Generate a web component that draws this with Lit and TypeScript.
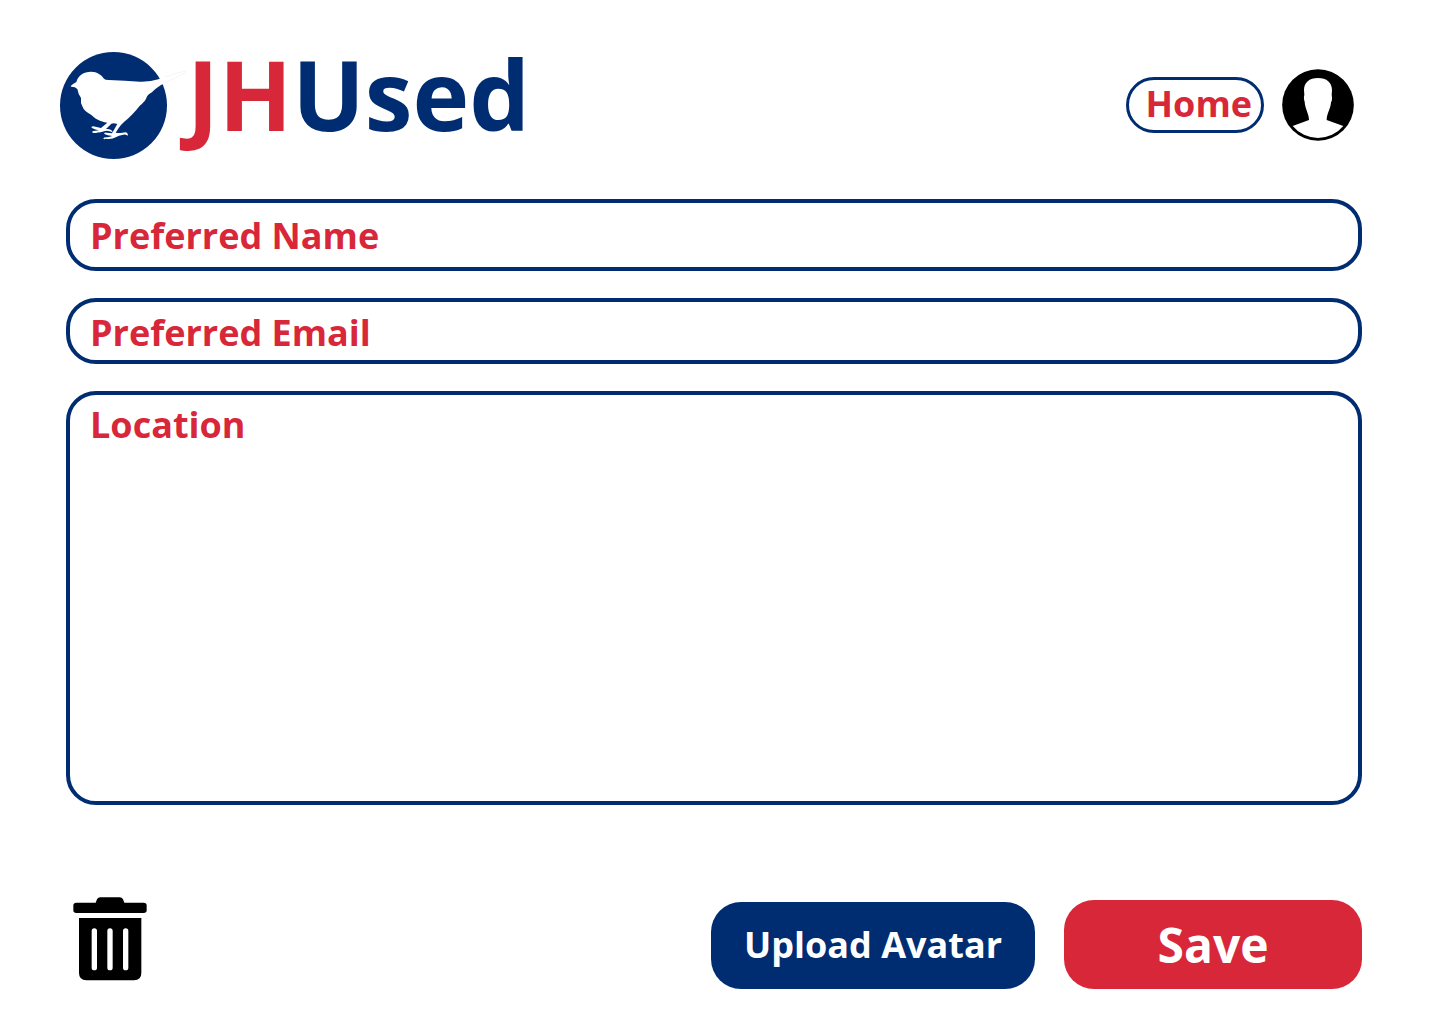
import { LitElement, html, css } from "lit";
import { customElement } from "lit/decorators.js";

@customElement("app-root")
export class AppRoot extends LitElement {
  static styles = css`
    :host {
      --navy: #002d72;
      --red: #d82739;
      box-sizing: border-box;
      min-height: 100vh;
      padding: 52px 78px 35px 66px;
      background: #fff;
      font-family: "Open Sans", "Noto Sans", sans-serif;
      font-weight: 700;
      font-size: 36px;
      line-height: 48px;
      display: flex;
      flex-direction: column;
    }
    * {
      box-sizing: border-box;
    }
    svg {
      display: block;
    }
    button,
    input,
    textarea {
      font: inherit;
      margin: 0;
      border: 0;
      background: none;
    }
    button {
      padding: 0;
      cursor: pointer;
    }
    .header {
      display: flex;
      justify-content: space-between;
      align-items: center;
      margin: 0 8px 40px -6px;
    }
    .brand {
      display: flex;
      align-items: center;
      height: 107px;
      text-decoration: none;
    }
    .title {
      margin: 0 0 24px;
      font-size: 96px;
      line-height: 130px;
      color: var(--navy);
    }
    .accent {
      color: var(--red);
    }
    .nav {
      display: flex;
      align-items: center;
      gap: 18px;
      margin-bottom: 2px;
    }
    .home {
      padding: 0 9px 2px 17px;
      border: 3px solid var(--navy);
      border-radius: 28px;
      color: var(--red);
      text-decoration: none;
    }
    .form {
      flex: 1;
      display: flex;
      flex-direction: column;
    }
    .fields {
      flex: 1;
      display: flex;
      flex-direction: column;
      gap: 27px;
    }
    .field {
      display: flex;
      gap: 16px;
      padding: 7px 20px 3px;
      border: 4px solid var(--navy);
      border-radius: 30px;
      color: var(--red);
      cursor: text;
    }
    .field.roomy {
      padding: 9px 20px 7px;
    }
    .field.area {
      flex: 1;
      padding: 6px 20px;
    }
    .control {
      flex: 1;
      min-width: 0;
      padding: 0;
      outline: none;
      resize: none;
      color: var(--navy);
    }
    .footer {
      display: flex;
      justify-content: space-between;
      align-items: flex-end;
      margin-top: 92px;
    }
    .trash {
      margin: 0 0 8px 7px;
    }
    .actions {
      display: flex;
      align-items: flex-end;
      gap: 29px;
    }
    .action {
      border-radius: 30px;
      color: #fff;
    }
    .upload {
      padding: 19px 33px 20px;
      background: var(--navy);
    }
    .save {
      min-width: 298px;
      padding: 12px 24px;
      font-size: 48px;
      line-height: 65px;
      background: var(--red);
    }
  `;

  private bird() {
    return html`<svg width="127" height="107" viewBox="30 21 381 321" aria-hidden="true">
      <circle cx="190.5" cy="181.5" r="160.5" fill="#002d72" />
      <path
        fill="#fff"
        d="M62 123 Q70 115 79 111 C84 92 101 80 123 80 C142 80 155 90 162 101 Q165 105 176 105 Q225 107 270 110 Q300 111 328 102 Q365 87 406 78 Q410 80 405 84 Q370 104 339 117 C322 126 314 134 306 142 Q292 149 290 157 C284 172 276 176 268 184 C256 200 240 217 222 231 Q212 240 206 249 L197 263 C207 266 218 263 227 262 Q235 264 233 272 Q224 266 217 270 Q206 272 199 276 Q184 285 165 281 Q162 285 160 280 Q163 275 174 277 L187 273 Q172 272 163 267 Q161 261 170 263 L186 265 L202 237 Q190 233 184 236 Q174 246 168 252 C176 251 186 253 188 262 Q176 256 165 258 Q150 263 146 262 Q138 266 128 263 Q124 259 131 258 L147 256 Q136 254 126 249 Q121 244 130 244 L153 249 L172 233 C150 230 135 220 123 209 Q102 199 97 184 Q91 174 93 159 Q85 149 82 132 Q76 125 64 125 Z"
      />
      <path fill="none" stroke="#f0f0f0" stroke-width="2" d="M345 96 Q380 83 407 78 Q409 81 400 86 Q370 103 345 113" />
    </svg>`;
  }

  private avatar() {
    return html`<svg width="72" height="72" viewBox="0 0 216 216" aria-hidden="true">
      <circle cx="108" cy="108" r="107.5" />
      <path
        fill="#fff"
        d="M108 27 C134 27 150 41 150 63 L149 78 Q152 92 147 100 C146 120 134 134 134 153 L184 171 A98.5 98.5 0 0 1 32 171 L81 153 C81 134 69 120 68 98 Q64 88 67 78 L66 63 C66 41 82 27 108 27 Z"
      />
    </svg>`;
  }

  private trash() {
    return html`<svg width="74" height="84" viewBox="39 21 222 252" aria-hidden="true">
      <path d="M49 38 H107 L111 28 Q114 22 121 22 H179 Q186 22 189 28 L193 38 H251 Q260 38 260 46 V61 Q260 69 251 69 H49 Q40 69 40 61 V46 Q40 38 49 38 Z" />
      <path d="M57 84 H244 V249 Q244 271 222 271 H79 Q57 271 57 249 Z" />
      <path d="M103 123 V233 M150 123 V233 M197 123 V233" stroke="#fff" stroke-width="16" stroke-linecap="round" />
    </svg>`;
  }

  render() {
    return html`
      <header class="header">
        <a class="brand" href="#" aria-label="JHUsed">
          ${this.bird()}
          <h1 class="title"><span class="accent">JH</span>Used</h1>
        </a>
        <nav class="nav">
          <a class="home" href="#">Home</a>
          <button type="button" aria-label="Profile">${this.avatar()}</button>
        </nav>
      </header>
      <form class="form">
        <div class="fields">
          <label class="field roomy">Preferred Name<input class="control" type="text" name="name" /></label>
          <label class="field">Preferred Email<input class="control" type="email" name="email" /></label>
          <label class="field area">Location<textarea class="control" name="location"></textarea></label>
        </div>
        <div class="footer">
          <button class="trash" type="button" aria-label="Delete">${this.trash()}</button>
          <div class="actions">
            <button class="action upload" type="button">Upload Avatar</button>
            <button class="action save" type="button">Save</button>
          </div>
        </div>
      </form>
    `;
  }
}
